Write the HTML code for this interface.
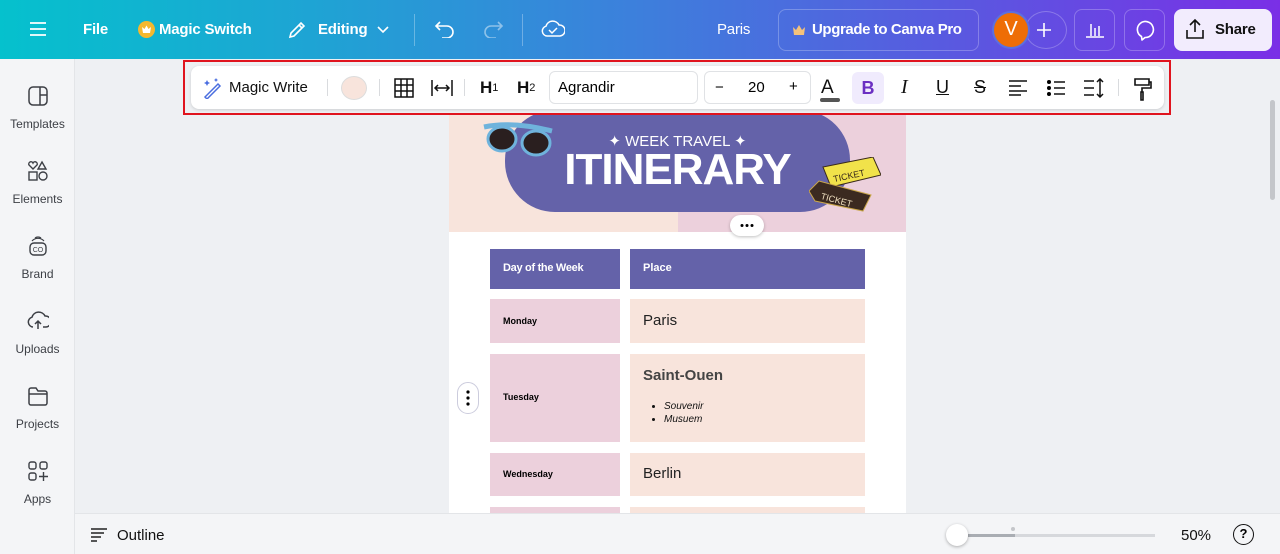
<!DOCTYPE html>
<html><head><meta charset="utf-8"><style>
*{box-sizing:border-box;margin:0;padding:0}
body{width:1280px;height:554px;overflow:hidden;font-family:"Liberation Sans",sans-serif;background:#eef0f3;position:relative}
.hdr{position:absolute;left:0;top:0;width:1280px;height:59px;background:linear-gradient(90deg,#05c1cd 0%,#1fa3d4 25%,#3d7fdc 50%,#5a58e0 75%,#7a2fe6 100%);color:#fff}
.hdr .t{position:absolute;top:21px;font-size:15px;font-weight:bold;letter-spacing:-.2px}
.ab{position:absolute}
.side{position:absolute;left:0;top:59px;width:75px;height:495px;background:#f4f5f7;border-right:1px solid #e3e5e8}
.si{position:absolute;left:0;width:75px;text-align:center;font-size:12px;color:#3c3f45}
.si svg{display:block;margin:0 auto 10px}
.tb{position:absolute;left:191px;top:66px;width:973px;height:43px;background:#fff;border-radius:8px;box-shadow:0 1px 3px rgba(0,0,0,.15)}
.red{position:absolute;left:183px;top:60px;width:988px;height:55px;border:2px solid #e0141e}
.tb .i{position:absolute;top:0;height:43px;display:flex;align-items:center;font-size:15px;color:#111}
.sep{position:absolute;top:13px;width:1px;height:17px;background:#d9dbde}
.page{position:absolute;left:449px;top:115px;width:457px;height:398px;background:#fff;overflow:hidden}
.cell{position:absolute}
.bot{position:absolute;left:75px;top:513px;width:1205px;height:41px;background:#f4f5f7;border-top:1px solid #e3e5e8}
</style></head><body>
<div class="hdr">
<svg class="ab" style="left:29px;top:21px" width="18" height="16"><path d="M1 2h16M1 8h16M1 14h16" stroke="#fff" stroke-width="1.8"/></svg>
<span class="t" style="left:83px">File</span>
<svg class="ab" style="left:138px;top:21px" width="17" height="17"><circle cx="8.5" cy="8.5" r="8.5" fill="#f5b82e"/><path d="M4 6l2.5 2 2-3.5 2 3.5 2.5-2-1 6h-7z" fill="#fff"/></svg>
<span class="t" style="left:159px">Magic Switch</span>
<svg class="ab" style="left:287px;top:20px" width="20" height="20"><path d="M3 17l1-4 10-10 3 3-10 10z M12 5l3 3" stroke="#fff" stroke-width="1.6" fill="none"/></svg>
<span class="t" style="left:318px">Editing</span>
<svg class="ab" style="left:377px;top:26px" width="12" height="8"><path d="M1 1l5 5 5-5" stroke="#fff" stroke-width="1.6" fill="none"/></svg>
<div class="ab" style="left:414px;top:14px;width:1px;height:32px;background:rgba(255,255,255,.3)"></div>
<svg class="ab" style="left:434px;top:20px" width="22" height="18"><path d="M6 2L2 6l4 4M2 6h11a6 6 0 010 12H8" stroke="#fff" stroke-width="1.6" fill="none"/></svg>
<svg class="ab" style="left:482px;top:20px" width="22" height="18" opacity=".45"><path d="M16 2l4 4-4 4M20 6H9a6 6 0 000 12h5" stroke="#fff" stroke-width="1.6" fill="none"/></svg>
<div class="ab" style="left:522px;top:14px;width:1px;height:32px;background:rgba(255,255,255,.3)"></div>
<svg class="ab" style="left:541px;top:19px" width="24" height="20"><path d="M6 17a5 5 0 01-1-9.8A7 7 0 0118 6a5 5 0 011 11z M8 11l3 3 5-5" stroke="#fff" stroke-width="1.5" fill="none"/></svg>
<span class="t" style="left:717px;font-weight:normal">Paris</span>
<div class="ab" style="left:778px;top:9px;width:201px;height:42px;border:1px solid rgba(255,255,255,.25);border-radius:8px"></div>
<svg class="ab" style="left:793px;top:25px" width="12" height="10"><path d="M0 2l3 3 3-5 3 5 3-3-1 8H1z" fill="#f5c27a"/></svg>
<span class="t" style="left:812px;letter-spacing:-.4px">Upgrade to Canva Pro</span>
<div class="ab" style="left:1025px;top:11px;width:42px;height:38px;border:1px solid rgba(255,255,255,.25);border-radius:50%"></div>
<svg class="ab" style="left:1036px;top:22px" width="16" height="16"><path d="M8 1v14M1 8h14" stroke="#fff" stroke-width="1.6"/></svg>
<div class="ab" style="left:992px;top:11px;width:38px;height:38px;background:#ee6d06;border-radius:50%;border:2px solid #5b6fe0;text-align:center;line-height:33px;font-size:20px">V</div>
<div class="ab" style="left:1074px;top:9px;width:41px;height:42px;border:1px solid rgba(255,255,255,.25);border-radius:8px"></div>
<svg class="ab" style="left:1085px;top:20px" width="20" height="18"><path d="M1 17h18M6 4v12M10 8v8M14 6v10" stroke="#fff" stroke-width="1.5"/></svg>
<div class="ab" style="left:1124px;top:9px;width:41px;height:42px;border:1px solid rgba(255,255,255,.25);border-radius:8px"></div>
<svg class="ab" style="left:1134px;top:19px" width="22" height="22"><path d="M7.5 17.5A8 8 0 1 1 11 18.5 L8 21 Z" stroke="#fff" stroke-width="1.6" fill="none" stroke-linejoin="round"/></svg>
<div class="ab" style="left:1174px;top:9px;width:98px;height:42px;background:#f2ecfd;border-radius:8px"></div>
<svg class="ab" style="left:1185px;top:18px" width="20" height="22"><path d="M10 14V2M5 7l5-5 5 5M2 12v8h16v-8" stroke="#111" stroke-width="1.6" fill="none"/></svg>
<span class="t" style="left:1215px;color:#111">Share</span>
</div>

<div class="side">
<div class="si" style="top:26px"><svg width="22" height="22"><rect x="2" y="2" width="18" height="18" rx="4" fill="none" stroke="#3c3f45" stroke-width="1.5"/><path d="M13 2v18M13 10h7" stroke="#3c3f45" stroke-width="1.5"/></svg>Templates</div>
<div class="si" style="top:101px"><svg width="22" height="22"><path d="M6 9L2 5a2 2 0 014-2 2 2 0 014 2z M15 2l4 7h-8z" fill="none" stroke="#3c3f45" stroke-width="1.4"/><rect x="2" y="12" width="8" height="8" fill="none" stroke="#3c3f45" stroke-width="1.4"/><circle cx="16" cy="16" r="4" fill="none" stroke="#3c3f45" stroke-width="1.4"/></svg>Elements</div>
<div class="si" style="top:176px"><svg width="22" height="22"><rect x="3" y="8" width="16" height="12" rx="4" fill="none" stroke="#3c3f45" stroke-width="1.4"/><path d="M5 6a8 8 0 0112 0M8 3a5 5 0 016 0" stroke="#3c3f45" fill="none" stroke-width="1.2"/><text x="11" y="17" font-size="7" text-anchor="middle" fill="#3c3f45" font-family="Liberation Sans">CO</text></svg>Brand</div>
<div class="si" style="top:251px"><svg width="22" height="22"><path d="M6 17a5 5 0 01-1-9.8A7 7 0 0118 6a5 5 0 011 11h-3 M11 19v-8M8 14l3-3 3 3" stroke="#3c3f45" stroke-width="1.5" fill="none"/></svg>Uploads</div>
<div class="si" style="top:326px"><svg width="22" height="22"><path d="M2 5a2 2 0 012-2h5l2 3h7a2 2 0 012 2v10a2 2 0 01-2 2H4a2 2 0 01-2-2z M2 9h18" stroke="#3c3f45" stroke-width="1.5" fill="none"/></svg>Projects</div>
<div class="si" style="top:401px"><svg width="22" height="22"><rect x="2" y="2" width="7" height="7" rx="2" fill="none" stroke="#3c3f45" stroke-width="1.4"/><rect x="13" y="2" width="7" height="7" rx="2" fill="none" stroke="#3c3f45" stroke-width="1.4"/><rect x="2" y="13" width="7" height="7" rx="2" fill="none" stroke="#3c3f45" stroke-width="1.4"/><path d="M16.5 12v9M12 16.5h9" stroke="#3c3f45" stroke-width="1.4"/></svg>Apps</div>
</div>

<div class="page">
<div class="cell" style="left:0;top:0;width:229px;height:117px;background:#f8e4dc"></div>
<div class="cell" style="left:229px;top:0;width:228px;height:117px;background:#ecd0dc"></div>
<div class="cell" style="left:56px;top:-5px;width:345px;height:102px;background:#6462a9;border-radius:50px"></div>
<div class="cell" style="left:0;top:17px;width:457px;text-align:center;color:#fff;font-size:15px">✦ WEEK TRAVEL ✦</div>
<div class="cell" style="left:0;top:30px;width:457px;text-align:center;color:#fff;font-size:44px;font-weight:bold;letter-spacing:-1px">ITINERARY</div>
<svg class="cell" style="left:33px;top:4px" width="74" height="38"><path d="M2 8Q30 2 70 12" stroke="#6fb3dc" stroke-width="5" fill="none"/><ellipse cx="20" cy="20" rx="14" ry="12" fill="#2a1f1f" stroke="#6fb3dc" stroke-width="3"/><ellipse cx="54" cy="24" rx="14" ry="12" fill="#2a1f1f" stroke="#6fb3dc" stroke-width="3"/></svg>
<svg class="cell" style="left:360px;top:42px" width="72" height="64"><path d="M14 10l50-10 8 18-50 12z" fill="#f1e24a" stroke="#3a2a1a"/><text x="24" y="24" font-size="9" font-family="Liberation Sans" transform="rotate(-12 30 20)" fill="#3a2a1a">TICKET</text><path d="M0 34l10-10 52 14-8 16-48-10z" fill="#3b2a20" stroke="#c9a64a"/><text x="12" y="44" font-size="9" font-family="Liberation Sans" transform="rotate(15 20 40)" fill="#f0e0c0">TICKET</text></svg>
<div class="cell" style="left:281px;top:100px;width:34px;height:21px;background:#fff;border-radius:11px;box-shadow:0 1px 3px rgba(0,0,0,.25)"><svg width="34" height="21"><circle cx="12" cy="10.5" r="1.5"/><circle cx="17" cy="10.5" r="1.5"/><circle cx="22" cy="10.5" r="1.5"/></svg></div>
<div class="cell" style="left:41px;top:134px;width:130px;height:40px;background:#6462a9;color:#fff;font-size:11px;font-weight:bold;padding:13px 0 0 13px;letter-spacing:-.3px">Day of the Week</div>
<div class="cell" style="left:181px;top:134px;width:235px;height:40px;background:#6462a9;color:#fff;font-size:11px;font-weight:bold;padding:13px 0 0 13px">Place</div>
<div class="cell" style="left:41px;top:184px;width:130px;height:44px;background:#ecd0dc;font-size:9px;font-weight:bold;padding:17px 0 0 13px">Monday</div>
<div class="cell" style="left:181px;top:184px;width:235px;height:44px;background:#f8e4dc;font-size:15px;padding:13px 0 0 13px;color:#222">Paris</div>
<div class="cell" style="left:41px;top:239px;width:130px;height:88px;background:#ecd0dc;font-size:9px;font-weight:bold;padding:38px 0 0 13px">Tuesday</div>
<div class="cell" style="left:181px;top:239px;width:235px;height:88px;background:#f8e4dc;padding:13px 0 0 13px;color:#444"><div style="font-size:15px;font-weight:bold">Saint-Ouen</div><ul style="font-size:10px;font-style:italic;color:#111;margin:16px 0 0 21px;line-height:13px"><li>Souvenir</li><li>Musuem</li></ul></div>
<div class="cell" style="left:41px;top:338px;width:130px;height:43px;background:#ecd0dc;font-size:9px;font-weight:bold;padding:16px 0 0 13px">Wednesday</div>
<div class="cell" style="left:181px;top:338px;width:235px;height:43px;background:#f8e4dc;font-size:15px;padding:12px 0 0 13px;color:#222">Berlin</div>
<div class="cell" style="left:41px;top:392px;width:130px;height:20px;background:#ecd0dc"></div>
<div class="cell" style="left:181px;top:392px;width:235px;height:20px;background:#f8e4dc"></div>
</div>
<div class="ab" style="left:457px;top:382px;width:22px;height:32px;background:#fff;border:1px solid #ccd;border-radius:11px"><svg width="20" height="30"><circle cx="10" cy="9" r="1.6"/><circle cx="10" cy="15" r="1.6"/><circle cx="10" cy="21" r="1.6"/></svg></div>
<div class="ab" style="left:1270px;top:100px;width:5px;height:100px;background:#c4c6ca;border-radius:3px"></div>

<div class="red"></div>
<div class="tb">
<svg class="ab" style="left:11px;top:11px" width="22" height="22"><path d="M3 20l13-13 2 2-13 13z" stroke="#4a6ee0" stroke-width="1.5" fill="none"/><path d="M5 3l1 2 2 1-2 1-1 2-1-2-2-1 2-1zM14 1l.7 1.3 1.3.7-1.3.7L14 5l-.7-1.3L12 3l1.3-.7z" fill="#4a6ee0"/></svg>
<div class="i" style="left:38px">Magic Write</div>
<div class="sep" style="left:136px"></div>
<div class="ab" style="left:150px;top:10px;width:26px;height:24px;border-radius:50%;background:#f8e4dc;border:1px solid #ddd"></div>
<div class="sep" style="left:188px"></div>
<svg class="ab" style="left:203px;top:12px" width="20" height="20"><path d="M1 1h18v18H1zM1 7h18M1 13h18M7 1v18M13 1v18" stroke="#111" stroke-width="1.5" fill="none"/></svg>
<svg class="ab" style="left:239px;top:12px" width="24" height="20"><path d="M2 2v16M22 2v16M6 10h12M8 7l-3 3 3 3M16 7l3 3-3 3" stroke="#111" stroke-width="1.5" fill="none"/></svg>
<div class="sep" style="left:273px"></div>
<div class="i" style="left:289px;font-weight:bold;font-size:17px">H<span style="font-size:11px;font-weight:normal">1</span></div>
<div class="i" style="left:326px;font-weight:bold;font-size:17px">H<span style="font-size:11px;font-weight:normal">2</span></div>
<div class="ab" style="left:358px;top:5px;width:149px;height:33px;border:1px solid #e0e2e5;border-radius:6px;padding:7px 8px;font-size:15px">Agrandir</div>
<div class="ab" style="left:513px;top:5px;width:107px;height:33px;border:1px solid #e0e2e5;border-radius:6px;font-size:15px"><span class="ab" style="left:10px;top:7px">−</span><span class="ab" style="left:43px;top:7px">20</span><span class="ab" style="left:84px;top:6px">+</span></div>
<div class="i" style="left:630px;font-size:19px">A</div>
<div class="ab" style="left:629px;top:32px;width:20px;height:4px;background:#555;border-radius:2px"></div>
<div class="ab" style="left:661px;top:6px;width:32px;height:32px;border-radius:6px;background:#f0ebfd;color:#6b2fc2;font-weight:bold;font-size:18px;text-align:center;line-height:32px">B</div>
<div class="i" style="left:710px;font-style:italic;font-family:'Liberation Serif',serif;font-size:20px">I</div>
<div class="i" style="left:745px;font-size:18px;text-decoration:underline">U</div>
<div class="i" style="left:783px;font-size:18px;text-decoration:line-through">S</div>
<svg class="ab" style="left:817px;top:14px" width="20" height="16"><path d="M1 1h18M1 6h12M1 11h18M1 15h12" stroke="#111" stroke-width="1.5"/></svg>
<svg class="ab" style="left:855px;top:13px" width="20" height="18"><circle cx="3" cy="3" r="2"/><circle cx="3" cy="9" r="2"/><circle cx="3" cy="15" r="2"/><path d="M8 3h11M8 9h11M8 15h11" stroke="#111" stroke-width="1.5"/></svg>
<svg class="ab" style="left:892px;top:12px" width="22" height="20"><path d="M1 3h10M1 10h10M1 17h10M17 1v18M14 4l3-3 3 3M14 16l3 3 3-3" stroke="#111" stroke-width="1.5" fill="none"/></svg>
<div class="sep" style="left:927px"></div>
<svg class="ab" style="left:942px;top:11px" width="20" height="24"><path d="M2 2h14v6H2zM16 5h2v6H9v4M8 15h2v8H8z" stroke="#111" stroke-width="1.6" fill="none"/></svg>
</div>

<div class="bot">
<svg class="ab" style="left:16px;top:14px" width="16" height="14"><path d="M0 1h16M0 5h13M0 9h10M0 13h6" stroke="#222" stroke-width="1.5"/></svg>
<span class="ab" style="left:42px;top:13px;font-size:15px;color:#111">Outline</span>
<div class="ab" style="left:893px;top:20px;width:187px;height:3px;background:#d6d8dc"></div>
<div class="ab" style="left:893px;top:20px;width:47px;height:3px;background:#a9adb3"></div>
<div class="ab" style="left:936px;top:13px;width:4px;height:4px;border-radius:50%;background:#c4c6ca"></div>
<div class="ab" style="left:871px;top:10px;width:22px;height:22px;border-radius:50%;background:#fff;box-shadow:0 1px 3px rgba(0,0,0,.3)"></div>
<span class="ab" style="left:1106px;top:13px;font-size:15px;color:#111">50%</span>
<div class="ab" style="left:1158px;top:10px;width:21px;height:21px;border-radius:50%;border:1.6px solid #111;text-align:center;font-size:13px;line-height:18px;font-weight:bold">?</div>
</div>
</body></html>
